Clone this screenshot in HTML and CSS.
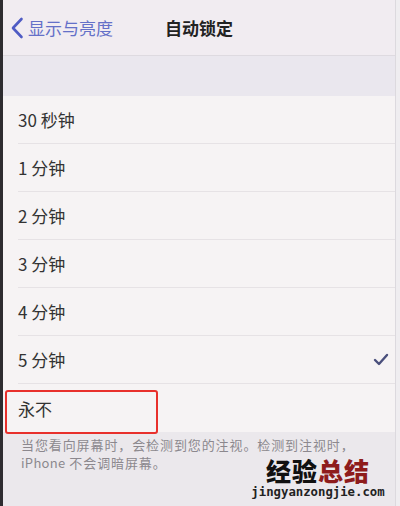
FILE: index.html
```html
<!DOCTYPE html>
<html lang="zh-CN">
<head>
    <meta charset="UTF-8">
    <meta name="viewport" content="width=device-width, initial-scale=1.0">
    <title>自动锁定</title>
    <link rel="stylesheet" href="styles.css">
</head>
<body>
    <div class="screen">
        <!-- Navigation bar -->
        <div class="nav-bar">
            <div class="nav-back">
                <svg class="chevron" width="14" height="22" viewBox="0 0 14 22">
                    <path d="M11.5 2 L3 11 L11.5 20" fill="none" stroke="#4f5bc4" stroke-width="2.6" stroke-linecap="round" stroke-linejoin="round"/>
                </svg>
                <span>显示与亮度</span>
            </div>
            <div class="nav-title">自动锁定</div>
        </div>

        <div class="section-gap"></div>

        <!-- Options list -->
        <ul class="option-list">
            <li>30 秒钟</li>
            <li>1 分钟</li>
            <li>2 分钟</li>
            <li>3 分钟</li>
            <li>4 分钟</li>
            <li class="selected">5 分钟
                <svg class="check" width="16" height="13" viewBox="0 0 16 13">
                    <path d="M2 7 L6 11 L14 2" fill="none" stroke="#4a4f7c" stroke-width="2.4" stroke-linecap="round" stroke-linejoin="round"/>
                </svg>
            </li>
            <li class="last">永不<span class="highlight"></span></li>
        </ul>

        <div class="footer-note">当您看向屏幕时，会检测到您的注视。检测到注视时，<br><span class="latin">iPhone</span> 不会调暗屏幕。</div>
    </div>

    <!-- Watermark -->
    <div class="watermark">
        <div class="wm-title"><span class="wm-dark">经验</span><span class="wm-red">总结</span></div>
        <div class="wm-url">jingyanzongjie.com</div>
    </div>
</body>
</html>
```

FILE: styles.css
```css
body {
    margin: 0;
    background: #efedf0;
    font-family: "Noto Sans CJK SC", "Noto Sans", sans-serif;
    width: 400px;
    height: 506px;
    overflow: hidden;
}

.screen {
    width: 392px;
    height: 506px;
    border-left: 3px solid #2e2c30;
    border-right: 1px solid #dcd9de;
    background: #ebe8ec;
}

.nav-bar {
    height: 55px;
    background: #f1ecf1;
    border-bottom: 1px solid #dedae0;
    display: flex;
    align-items: center;
    position: relative;
}

.nav-back {
    display: flex;
    align-items: center;
    gap: 4px;
    padding-left: 7px;
    color: #6470c8;
    font-size: 17px;
}

.nav-title {
    position: absolute;
    left: 0;
    right: 0;
    text-align: center;
    font-size: 17px;
    font-weight: 700;
    color: #222;
    pointer-events: none;
}

.section-gap {
    height: 40px;
    background: #eae7ee;
}

.option-list {
    list-style: none;
    margin: 0;
    padding: 0;
    background: #f6f3f4;
}

.option-list li {
    height: 48px;
    display: flex;
    align-items: center;
    justify-content: space-between;
    margin-left: 15px;
    padding-right: 6px;
    border-bottom: 1px solid #e6e2e5;
    box-sizing: border-box;
    font-size: 17px;
    color: #333;
    position: relative;
}

.option-list li.last {
    border-bottom: none;
}

.highlight {
    position: absolute;
    left: -13px;
    top: 6px;
    width: 153px;
    height: 44px;
    border: 2px solid #e8302c;
    border-radius: 3px;
    box-sizing: border-box;
}

.footer-note {
    padding: 4px 10px 0 18px;
    font-size: 13px;
    letter-spacing: 0.9px;
    line-height: 18px;
    color: #8c888e;
    white-space: nowrap;
}

.footer-note .latin {
    letter-spacing: 0.3px;
}

.watermark {
    position: absolute;
    left: 250px;
    top: 455px;
    width: 136px;
    text-align: center;
}

.wm-title {
    font-size: 25px;
    font-weight: 900;
    line-height: 30px;
    letter-spacing: 1px;
}

.wm-dark {
    color: #111;
}

.wm-red {
    color: #8e1c1c;
}

.wm-url {
    font-family: "DejaVu Sans Mono", monospace;
    font-size: 12.3px;
    font-weight: 700;
    line-height: 14px;
    color: #222;
}
```
